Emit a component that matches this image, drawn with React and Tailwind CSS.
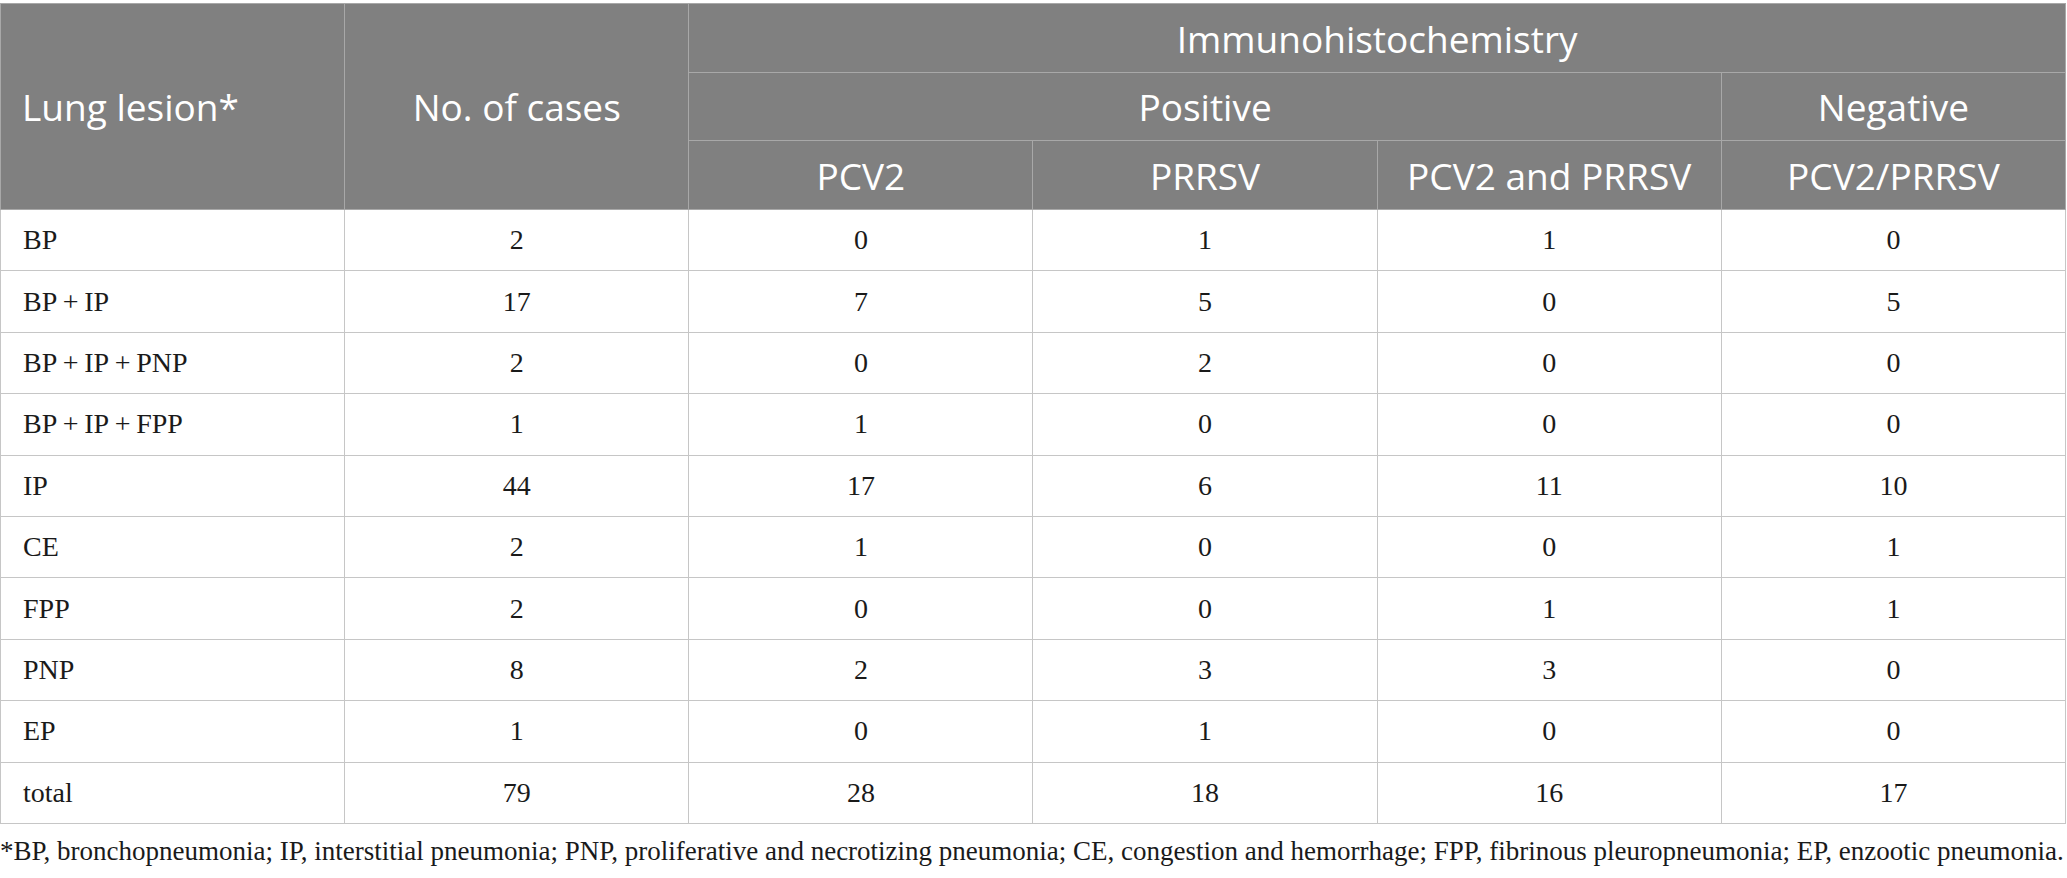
const rows = [
  ['BP', '2', '0', '1', '1', '0'],
  ['BP\u2009+\u2009IP', '17', '7', '5', '0', '5'],
  ['BP\u2009+\u2009IP\u2009+\u2009PNP', '2', '0', '2', '0', '0'],
  ['BP\u2009+\u2009IP\u2009+\u2009FPP', '1', '1', '0', '0', '0'],
  ['IP', '44', '17', '6', '11', '10'],
  ['CE', '2', '1', '0', '0', '1'],
  ['FPP', '2', '0', '0', '1', '1'],
  ['PNP', '8', '2', '3', '3', '0'],
  ['EP', '1', '0', '1', '0', '0'],
  ['total', '79', '28', '18', '16', '17'],
];

const th = 'border border-[#a8a8a8] bg-[#808080] text-white font-normal text-[37px] leading-none font-["Open_Sans",sans-serif] p-0';

export default function App() {
  return (
    <div className="w-[2067px] bg-white pt-[3px]">
      <table className="w-[2066px] table-fixed border-collapse">
        <thead>
          <tr className="h-[69px]">
            <th rowSpan={3} className={`${th} text-left pl-[21px]`}>Lung lesion*</th>
            <th rowSpan={3} className={`${th} text-center`}>No. of cases</th>
            <th colSpan={4} className={`${th} text-center`}>Immunohistochemistry</th>
          </tr>
          <tr className="h-[68px]">
            <th colSpan={3} className={`${th} text-center`}>Positive</th>
            <th className={`${th} text-center`}>Negative</th>
          </tr>
          <tr className="h-[69px]">
            <th className={`${th} text-center`}>PCV2</th>
            <th className={`${th} text-center`}>PRRSV</th>
            <th className={`${th} text-center`}>PCV2 and PRRSV</th>
            <th className={`${th} text-center`}>PCV2/PRRSV</th>
          </tr>
        </thead>
        <tbody className='font-["Liberation_Serif",serif] text-[28px] text-[#1a1a1a]'>
          {rows.map((r, i) => (
            <tr key={i} className="h-[61.4px]">
              {r.map((c, j) => (
                <td
                  key={j}
                  className={`border border-[#c6c6c6] p-0 leading-none ${j === 0 ? 'text-left pl-[22px]' : 'text-center'}`}
                >
                  {c}
                </td>
              ))}
            </tr>
          ))}
        </tbody>
      </table>
      <p className='mt-[12px] font-["Liberation_Serif",serif] text-[27px] leading-[30px] text-[#1a1a1a] whitespace-nowrap'>
        *BP, bronchopneumonia; IP, interstitial pneumonia; PNP, proliferative and necrotizing pneumonia; CE, congestion and hemorrhage; FPP, fibrinous pleuropneumonia; EP, enzootic pneumonia.
      </p>
    </div>
  );
}
